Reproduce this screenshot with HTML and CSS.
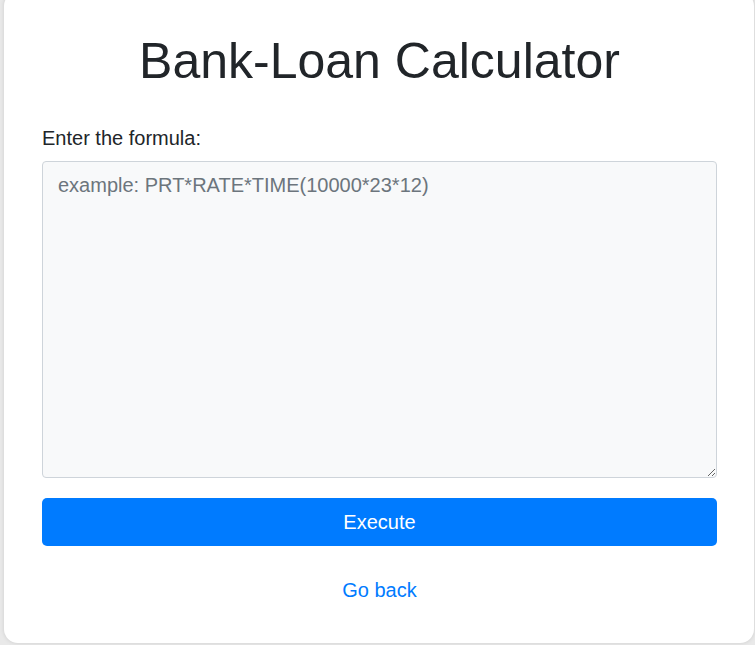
FILE: index.html
```html
<!DOCTYPE html>
<html>
<head>
<meta charset="utf-8">
<link rel="stylesheet" href="styles.css">
</head>
<body>
<div class="card">
  <h1 class="title">Bank-Loan Calculator</h1>
  <form class="form">
    <label class="label" for="formula">Enter the formula:</label>
    <textarea id="formula" class="input" placeholder="example: PRT*RATE*TIME(10000*23*12)"></textarea>
    <button type="button" class="btn">Execute</button>
  </form>
  <div class="back"><a href="#" class="link">Go back</a></div>
</div>
</body>
</html>
```
FILE: styles.css
```css
html, body {
  margin: 0;
  padding: 0;
  background: #e9e9e9;
  font-family: "Liberation Sans", Arial, sans-serif;
  color: #212529;
}
body {
  height: 645px;
  overflow: hidden;
}
.card {
  box-sizing: border-box;
  margin: -8px 1px 0 4px;
  height: 651px;
  background: #fff;
  border-radius: 14px;
  box-shadow: 0 0 4px rgba(0,0,0,0.12);
  padding: 36px 37px 0 38px;
}
.title {
  margin: 0;
  text-align: center;
  font-size: 50px;
  font-weight: 400;
  line-height: 60px;
  padding-top: 3px;
}
.form {
  display: flex;
  flex-direction: column;
  margin-top: 32px;
}
.label {
  font-size: 20px;
  line-height: 30px;
  margin-bottom: 8px;
}
.input {
  box-sizing: border-box;
  height: 317px;
  padding: 8px 15px;
  font-family: inherit;
  font-size: 20px;
  line-height: 30px;
  background: #f8f9fa;
  border: 1px solid #ced4da;
  border-radius: 4px;
  color: #495057;
  resize: vertical;
}
.input::placeholder {
  color: #6c757d;
}
.btn {
  margin-top: 20px;
  height: 48px;
  background: #007bff;
  color: #fff;
  border: none;
  border-radius: 5px;
  font-family: inherit;
  font-size: 20px;
  line-height: 30px;
}
.back {
  text-align: center;
  margin-top: 29px;
  font-size: 20px;
  line-height: 30px;
}
.link {
  color: #007bff;
  text-decoration: none;
}
```
